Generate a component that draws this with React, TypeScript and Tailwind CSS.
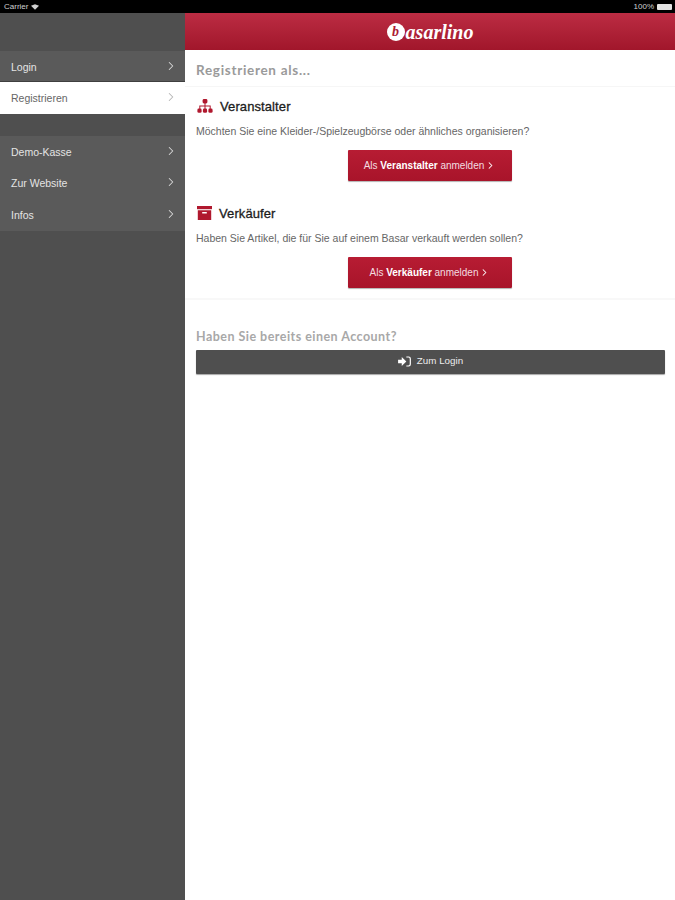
import type { ReactNode } from 'react';
import { ChevronRight } from 'lucide-react';

const sans = { fontFamily: '"Liberation Sans", Arial, sans-serif' };

const MenuItem = ({ label, active = false }: { label: string; active?: boolean }) => (
  <div
    className={
      active
        ? 'flex h-[31.5px] items-center justify-between bg-white pl-[11px] pr-[7px] text-[10.5px] text-[#666666]'
        : 'flex h-[31.5px] items-center justify-between bg-[#5a5a5a] pl-[11px] pr-[7px] text-[10.5px] text-[#e4e4e4]'
    }
  >
    <span className="pt-[2px]">{label}</span>
    <ChevronRight
      className={active ? 'mb-[2px] h-[14px] w-[14px] text-[#b5b5b5]' : 'mb-[2px] h-[14px] w-[14px] text-[#d8d8d8]'}
      strokeWidth={1.75}
    />
  </div>
);

const OrgIcon = () => (
  <svg viewBox="0 0 16 14" className="h-[14px] w-[16px] fill-[#b0182e]">
    <rect x="5.6" y="0" width="4.8" height="4.4" rx="1.4" />
    <path d="M7.5 4h1v2.6h5.2V10h-1V7.6H8.5V10h-1V7.6H3.3V10h-1V6.6h5.2z" />
    <rect x="0.4" y="9.6" width="4.2" height="4.2" rx="1.4" />
    <rect x="5.9" y="9.6" width="4.2" height="4.2" rx="1.4" />
    <rect x="11.4" y="9.6" width="4.2" height="4.2" rx="1.4" />
  </svg>
);

const BoxIcon = () => (
  <svg viewBox="0 0 15 14" className="h-[14px] w-[15px] fill-[#b0182e]">
    <rect x="0" y="0" width="15" height="3.2" />
    <path d="M0.8 4.2h13.4V14H0.8zM5.2 6v1.4h4.6V6z" fillRule="evenodd" />
  </svg>
);

const RedButton = ({ strong }: { strong: string }) => (
  <div className="flex justify-center">
    <button className="flex h-[30.5px] w-[164px] items-center justify-center gap-[1px] rounded-[1px] bg-gradient-to-b from-[#b71c33] to-[#a8142a] text-[10px] text-[#f3dde0] shadow-[0_1px_1px_rgba(0,0,0,0.3)]">
      <span className="whitespace-nowrap">
        Als <b className="font-bold text-white">{strong}</b> anmelden
      </span>
      <ChevronRight className="h-[11px] w-[11px] text-white" strokeWidth={2.25} />
    </button>
  </div>
);

const Section = ({ icon, title, text, strong }: { icon: ReactNode; title: string; text: string; strong: string }) => (
  <section>
    <div className="flex h-[14px] items-center gap-[7px] pl-[12px]">
      {icon}
      <h2 className="text-[13px] leading-none tracking-[0.1px] text-[#1c1c1c] [-webkit-text-stroke:0.3px_#1c1c1c]">{title}</h2>
    </div>
    <p className="mt-[12px] pl-[11px] text-[10.5px] leading-[12px] text-[#666666]">{text}</p>
    <div className="mt-[13px]">
      <RedButton strong={strong} />
    </div>
  </section>
);

const App = () => {
  return (
    <div className="flex h-[900px] w-[675px] flex-col overflow-hidden bg-white" style={sans}>
      <div className="flex h-[13px] shrink-0 items-center justify-between bg-black pl-[4px] pr-[3px] text-[8px] leading-none text-[#d0d0d0]">
        <div className="flex items-center gap-[3px]">
          <span>Carrier</span>
          <svg viewBox="0 0 10 7" className="h-[6px] w-[8px] fill-[#d0d0d0]">
            <path d="M0 2 5 0l5 2-5 5z" />
          </svg>
        </div>
        <div className="flex items-center gap-[3px]">
          <span>100%</span>
          <div className="h-[6px] w-[15px] rounded-[1px] bg-[#e4e4e4]" />
        </div>
      </div>

      <div className="flex min-h-0 flex-1">
        <aside className="w-[185px] shrink-0 bg-[#4f4f4f] pt-[38px]">
          <div className="h-[31px] overflow-hidden border-b border-[#3f3f3f]">
            <MenuItem label="Login" />
          </div>
          <MenuItem label="Registrieren" active />
          <div className="mt-[22.5px]">
            <MenuItem label="Demo-Kasse" />
            <MenuItem label="Zur Website" />
            <MenuItem label="Infos" />
          </div>
        </aside>

        <main className="flex min-w-0 flex-1 flex-col">
          <header className="flex h-[37px] items-center justify-center gap-[1px] bg-gradient-to-b from-[#bc2c43] to-[#a1162b]">
            <span className="flex h-[18px] w-[18px] items-center justify-center rounded-full bg-white text-[14px] font-bold italic leading-none text-[#ad1d33]" style={{ fontFamily: '"Liberation Serif", serif' }}>
              b
            </span>
            <span className="text-[20px] font-bold italic leading-none text-white" style={{ fontFamily: '"Liberation Serif", serif' }}>
              asarlino
            </span>
          </header>

          <div className="flex h-[37px] items-center border-b border-[#f6f6f6] pl-[11px] pt-[4px]">
            <h1 className="text-[13.5px] font-bold tracking-[0.7px] text-[#9a9a9a]" style={{ fontFamily: 'Lato, sans-serif' }}>
              Registrieren als...
            </h1>
          </div>

          <div className="flex flex-col gap-[25.5px] border-b-2 border-[#f8f8f8] pb-[10px] pt-[12px]">
            <Section
              icon={<OrgIcon />}
              title="Veranstalter"
              text="Möchten Sie eine Kleider-/Spielzeugbörse oder ähnliches organisieren?"
              strong="Veranstalter"
            />
            <Section
              icon={<BoxIcon />}
              title="Verkäufer"
              text="Haben Sie Artikel, die für Sie auf einem Basar verkauft werden sollen?"
              strong="Verkäufer"
            />
          </div>

          <div className="pl-[11px] pr-[10px] pt-[29px]">
            <h3 className="text-[12.5px] font-bold leading-[16px] tracking-[0.47px] text-[#a8a8a8]" style={{ fontFamily: 'Lato, sans-serif' }}>
              Haben Sie bereits einen Account?
            </h3>
            <button className="mt-[5px] flex h-[24px] w-full items-center justify-center gap-[6px] rounded-[1px] bg-[#4f4f4f] text-[9.8px] text-[#ececec] shadow-[0_1px_1px_rgba(0,0,0,0.35)]">
              <svg viewBox="0 0 14 12" className="h-[11px] w-[13px] fill-white">
                <path d="M0 4h4V1l5 5-5 5V8H0z" />
                <path d="M9 0.5h2.5A2.5 2.5 0 0 1 14 3v6a2.5 2.5 0 0 1-2.5 2.5H9v-1.2h2.2A1.5 1.5 0 0 0 12.7 8.8V3.2a1.5 1.5 0 0 0-1.5-1.5H9z" />
              </svg>
              <span>Zum Login</span>
            </button>
          </div>
        </main>
      </div>
    </div>
  );
};

export default App;
